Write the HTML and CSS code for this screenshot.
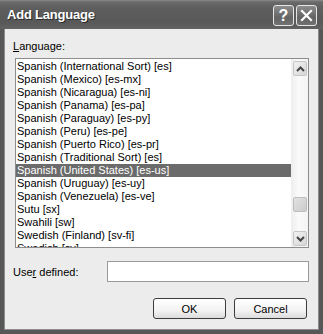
FILE: index.html
```html
<!DOCTYPE html>
<html>
<head>
    <title>Add Language</title>
    <link rel="stylesheet" href="styles.css">
</head>
<body>
    <div class="window">
        <div class="titlebar">
            <span class="title">Add Language</span>
            <div class="title-buttons">
                <span class="tb-button help">?</span>
                <span class="tb-button close">
                    <svg width="13" height="13" viewBox="0 0 13 13">
                        <path d="M2 2 L11 11 M11 2 L2 11" stroke="#fff" stroke-width="2.2" stroke-linecap="square"/>
                    </svg>
                </span>
            </div>
        </div>
        <div class="dialog-body">
            <div class="field-label"><u>L</u>anguage:</div>
            <div class="listbox">
                <ul class="items">
                    <li>Spanish (International Sort) [es]</li>
                    <li>Spanish (Mexico) [es-mx]</li>
                    <li>Spanish (Nicaragua) [es-ni]</li>
                    <li>Spanish (Panama) [es-pa]</li>
                    <li>Spanish (Paraguay) [es-py]</li>
                    <li>Spanish (Peru) [es-pe]</li>
                    <li>Spanish (Puerto Rico) [es-pr]</li>
                    <li>Spanish (Traditional Sort) [es]</li>
                    <li class="selected">Spanish (United States) [es-us]</li>
                    <li>Spanish (Uruguay) [es-uy]</li>
                    <li>Spanish (Venezuela) [es-ve]</li>
                    <li>Sutu [sx]</li>
                    <li>Swahili [sw]</li>
                    <li>Swedish (Finland) [sv-fi]</li>
                    <li>Swedish [sv]</li>
                </ul>
                <div class="scrollbar">
                    <div class="sb-button">
                        <svg width="9" height="6" viewBox="0 0 9 6"><path d="M1 5 L4.5 1.5 L8 5" fill="none" stroke="#444" stroke-width="2"/></svg>
                    </div>
                    <div class="sb-track">
                        <div class="sb-thumb"></div>
                    </div>
                    <div class="sb-button">
                        <svg width="9" height="6" viewBox="0 0 9 6"><path d="M1 1 L4.5 4.5 L8 1" fill="none" stroke="#444" stroke-width="2"/></svg>
                    </div>
                </div>
            </div>
            <div class="user-row">
                <label class="user-label" for="user-input">Use<u>r</u> defined:</label>
                <div class="input-field" id="user-input"></div>
            </div>
            <div class="actions">
                <button class="push-button">OK</button>
                <button class="push-button">Cancel</button>
            </div>
        </div>
    </div>
</body>
</html>
```
FILE: styles.css
```css
html {
    background-color: #555;
}

body {
    margin: 0;
    padding: 0;
    font-family: "Liberation Sans", Arial, sans-serif;
    font-size: 11px;
    color: #000;
}

.window {
    width: 323px;
    height: 334px;
    box-sizing: border-box;
    display: flex;
    flex-direction: column;
    background-color: #575757;
}

.titlebar {
    height: 29px;
    flex: none;
    display: flex;
    align-items: flex-start;
    justify-content: space-between;
    background: linear-gradient(to bottom, #8a8a8a 0, #6a6a6a 2px, #5e5e5e 8px, #585858 22px, #626262 29px);
}

.title {
    margin: 7px 0 0 7px;
    color: #fff;
    font-weight: bold;
    font-size: 13px;
    letter-spacing: -0.2px;
    text-shadow: 1px 1px 0 #2a2a2a;
}

.title-buttons {
    display: flex;
    gap: 2px;
    margin: 5px 6px 0 0;
}

.tb-button {
    width: 19px;
    height: 19px;
    border: 1px solid #e6e6e6;
    border-radius: 3px;
    display: flex;
    align-items: center;
    justify-content: center;
    background: linear-gradient(to bottom, #8c8c8c, #646464 60%, #707070);
    color: #fff;
}

.help {
    font-weight: bold;
    font-size: 16px;
}

.dialog-body {
    flex: 1;
    margin: 0 4px 4px 4px;
    background-color: #ececec;
    padding: 11px 10px 0 9px;
    box-shadow: inset 1px 0 0 #8c8c8c, inset -1px 0 0 #8c8c8c, inset 0 -1px 0 #8c8c8c;
}

.field-label {
    line-height: 13px;
    margin-bottom: 5px;
}

.listbox {
    margin-left: 2px;
    height: 190px;
    box-sizing: border-box;
    border: 1px solid #8d8d8d;
    background-color: #fff;
    display: flex;
    overflow: hidden;
}

.items {
    flex: 1;
    list-style: none;
    margin: 0;
    padding: 1px 0 0 0;
    overflow: hidden;
}

.items li {
    line-height: 13px;
    height: 13px;
    padding-left: 1px;
    white-space: nowrap;
}

.items li.selected {
    background-color: #6b6b6b;
    color: #fff;
}

.scrollbar {
    width: 17px;
    flex: none;
    display: flex;
    flex-direction: column;
    background: linear-gradient(to right, #efefef, #fafafa 40%, #f4f4f4);
    border-left: 1px solid #f0f0f0;
    padding: 2px 1px 1px 1px;
    box-sizing: border-box;
}

.sb-button {
    height: 15px;
    flex: none;
    box-sizing: border-box;
    border: 1px solid #c6c6c6;
    border-radius: 2px;
    background: linear-gradient(to bottom right, #f2f2f2, #d6d6d6);
    display: flex;
    align-items: center;
    justify-content: center;
}

.sb-track {
    flex: 1;
}

.sb-thumb {
    margin-top: 121px;
    height: 15px;
    box-sizing: border-box;
    border: 1px solid #bdbdbd;
    border-radius: 2px;
    background: linear-gradient(to bottom right, #e2e2e2, #cbcbcb);
}

.user-row {
    display: grid;
    grid-template-columns: 94px 1fr;
    align-items: center;
    margin-top: 13px;
}

.input-field {
    height: 21px;
    box-sizing: border-box;
    border: 1px solid #9a9a9a;
    background-color: #fff;
}

.actions {
    display: flex;
    justify-content: flex-end;
    gap: 8px;
    margin-top: 16px;
    padding-right: 2px;
}

.push-button {
    width: 73px;
    height: 21px;
    border: 1px solid #3c3c3c;
    border-radius: 3px;
    background: linear-gradient(to bottom, #ffffff, #f3f3f3 60%, #dcdcdc);
    font-family: "Liberation Sans", Arial, sans-serif;
    font-size: 11px;
    color: #000;
    padding: 0;
}
```
